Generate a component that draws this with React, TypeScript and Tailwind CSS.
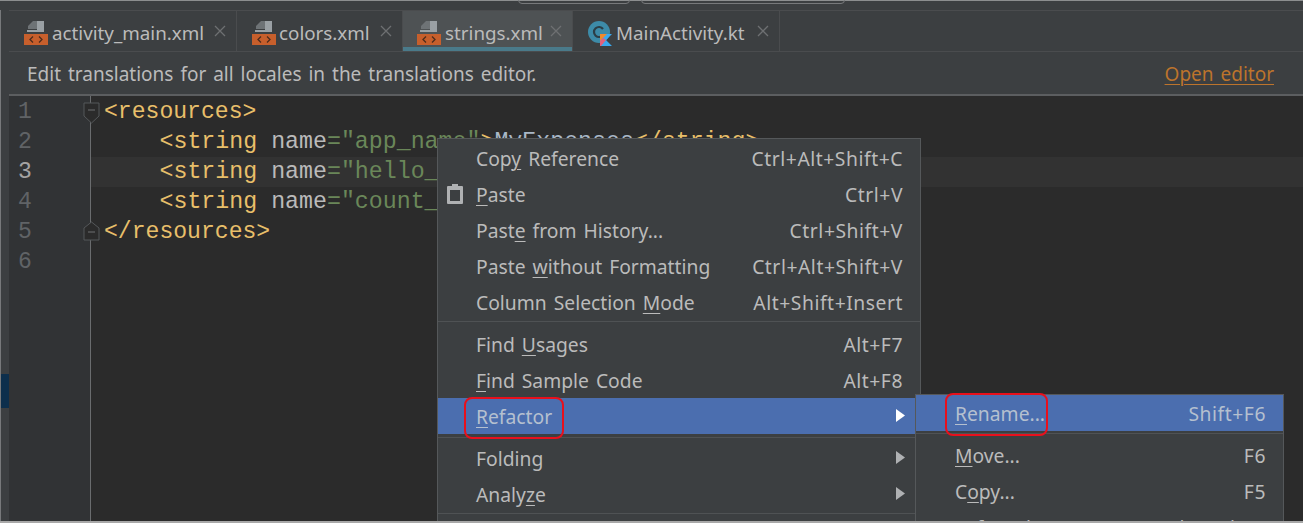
import React from 'react';

const UI_FONT = "font-['Noto_Sans','Noto_Sans_CJK_KR',sans-serif]";

const XmlIcon = () => (
  <svg width="24" height="24" viewBox="0 0 24 24" className="shrink-0">
    <path d="M9 0h4v8H4V5z" fill="#6e7376" />
    <path d="M13 0h7v11H3V9h10z" fill="#9aa0a4" />
    <rect x="0" y="13" width="24" height="11" fill="#c75f2c" />
    <path d="M9 15.500 6 18.500l3 3M15 15.500l3 3-3 3" fill="none" stroke="#4d2c1c" strokeWidth="1.300" />
  </svg>
);

const KotlinIcon = () => (
  <svg width="24" height="25" viewBox="0 0 24 25" className="shrink-0">
    <circle cx="11" cy="11" r="11" fill="#3d8ba8" />
    <path d="M15 8a5 5 0 1 0 0 6" fill="none" stroke="#2c3e46" strokeWidth="2.200" />
    <path d="M12 13h12l-6 6 6 6H12z" fill="#39a9f0" />
    <path d="M12 13h7l-7 7z" fill="#f08a2c" />
    <path d="M12 25v-5l3-3 3 2-5 6z" fill="#e2607c" />
  </svg>
);

const tabs = [
  { name: 'activity_main.xml', width: 'w-[228px]', pl: 'pl-[15px]', gap: 'gap-[4px]', icon: <XmlIcon /> },
  { name: 'colors.xml', width: 'w-[166px]', pl: 'pl-[15px]', gap: 'gap-[3px]', icon: <XmlIcon /> },
  { name: 'strings.xml', width: 'w-[170px]', pl: 'pl-[14px]', gap: 'gap-[4px]', icon: <XmlIcon />, active: true },
  { name: 'MainActivity.kt', width: 'w-[207px]', pl: 'pl-[15px]', gap: 'gap-[4px]', icon: <KotlinIcon /> },
];

const lineNumbers = [1, 2, 3, 4, 5, 6];

const Tag = ({ children }: { children: React.ReactNode }) => <span className="text-[#e8bf6a]">{children}</span>;
const Attr = ({ children }: { children: React.ReactNode }) => <span className="text-[#bababa]">{children}</span>;
const Str = ({ children }: { children: React.ReactNode }) => <span className="text-[#6a8759]">{children}</span>;

const StringOpen = ({ children }: { children: React.ReactNode }) => (
  <>
    <span className="pl-[55.500px]" />
    <Tag>&lt;string</Tag> <Attr>name</Attr>
    <Str>={children}</Str>
  </>
);

const U = ({ children }: { children: React.ReactNode }) => (
  <span className="underline underline-offset-[3px] decoration-1">{children}</span>
);

type Item = {
  label: React.ReactNode;
  key?: string;
  arrow?: boolean;
  selected?: boolean;
  paste?: boolean;
};

const ClipboardIcon = () => (
  <svg width="18" height="22" viewBox="0 0 18 22" className="absolute left-[8px] top-[6px]">
    <path d="M6 1h6v2h4a1 1 0 0 1 1 1v16a1 1 0 0 1-1 1H2a1 1 0 0 1-1-1V4a1 1 0 0 1 1-1h4z" fill="#afb1b3" />
    <rect x="4" y="7" width="10" height="11" fill="#3c3f41" />
  </svg>
);

const MenuRow = ({ item, textOffset = 'pt-0', leftPad = 'pl-[38px]' }: { item: Item; textOffset?: string; leftPad?: string }) => (
  <div
    className={`relative flex h-[36px] items-center justify-between ${leftPad} pr-[17px] text-[19.300px] [word-spacing:2px] ${textOffset} ${
      item.selected ? 'bg-[#4b6eaf] text-[#b5c0cf]' : 'text-[#bbbbbb]'
    }`}
  >
    {item.paste && <ClipboardIcon />}
    <span className="whitespace-pre">{item.label}</span>
    {item.key && <span className="whitespace-pre tracking-[0.550px]">{item.key}</span>}
    {item.arrow && (
      <svg width="9" height="13" viewBox="0 0 9 13" className="mb-[4px] mr-[-2px]">
        <path d="M0 0l9 6.500-9 6.500z" fill={item.selected ? '#ffffff' : '#afb1b3'} />
      </svg>
    )}
  </div>
);

const menuA: Item[] = [
  { label: <>Cop<U>y</U> Reference</>, key: 'Ctrl+Alt+Shift+C' },
  { label: <><U>P</U>aste</>, key: 'Ctrl+V', paste: true },
  { label: <>Past<U>e</U> from History...</>, key: 'Ctrl+Shift+V' },
  { label: <>Paste <U>w</U>ithout Formatting</>, key: 'Ctrl+Alt+Shift+V' },
  { label: <>Column Selection <U>M</U>ode</>, key: 'Alt+Shift+Insert' },
];
const menuB: Item[] = [
  { label: <>Find <U>U</U>sages</>, key: 'Alt+F7' },
  { label: <><U>F</U>ind Sample Code</>, key: 'Alt+F8' },
  { label: <><U>R</U>efactor</>, arrow: true, selected: true },
];
const menuC: Item[] = [
  { label: 'Folding', arrow: true },
  { label: <>Analy<U>z</U>e</>, arrow: true },
];
const subMenu: Item[] = [
  { label: <><U>M</U>ove...</>, key: 'F6' },
  { label: <>C<U>o</U>py...</>, key: 'F5' },
  { label: <>Safe <U>D</U>elete...</>, key: 'Alt+Delete' },
];

export default function App() {
  return (
    <div className={`relative h-[523px] w-[1303px] overflow-hidden bg-[#3c3f41] ${UI_FONT}`}>
      {/* window chrome at the very top */}
      <div className="relative h-[10px] border-t border-[#8c8e8f] bg-[#3c3f41]">
        <div className="absolute left-[518px] top-[-6px] h-[9px] w-[112px] rounded-[4px] border border-[#77797b]" />
        <div className="absolute left-[641px] top-[-6px] h-[9px] w-[204px] rounded-[4px] border border-[#77797b]" />
      </div>

      <div className="flex h-[513px]">
        {/* tool strip */}
        <div className="flex w-[9px] shrink-0 flex-col border-l border-[#77797b] bg-[#3c3f41] pt-[364px]">
          <div className="h-[34px] bg-[#0d2f4c]" />
        </div>

        <div className="flex min-w-0 flex-1 flex-col">
          {/* tabs */}
          <div className="flex h-[42px] shrink-0 border-y border-[#4a4c4e] bg-[#3c3f41]">
            {tabs.map((t) => (
              <div
                key={t.name}
                className={`relative flex ${t.width} ${t.pl} ${t.gap} items-center border-r border-[#4a4c4e] pt-[4px] text-[18.800px] text-[#bbbbbb] ${
                  t.active ? 'bg-[#4e5254]' : ''
                }`}
              >
                {t.icon}
                <span className="whitespace-pre">{t.name}</span>
                <svg width="12" height="12" viewBox="0 0 12 12" className="absolute right-[10px] top-[14px]">
                  <path d="M1 1l10 10M11 1 1 11" stroke="#6e7072" strokeWidth="1.300" />
                </svg>
                {t.active && <div className="absolute inset-x-0 bottom-0 h-[4px] bg-[#4a7a8a]" />}
              </div>
            ))}
          </div>

          {/* notification bar */}
          <div className="flex h-[44px] shrink-0 items-center justify-between border-b-2 border-[#5c5e60] pl-[18px] pr-[29px] pt-[3px] text-[19px] text-[#bbbbbb] [word-spacing:2px]">
            <span>Edit translations for all locales in the translations editor.</span>
            <span className="text-[#bd742c] underline underline-offset-[3px] decoration-1">Open editor</span>
          </div>

          {/* editor */}
          <div className="flex min-h-0 flex-1 font-['Liberation_Mono',monospace] text-[23.080px] leading-[30px]">
            <div className="w-[82px] shrink-0 border-r border-[#6a6c6e] bg-[#313335] pt-[1px]">
              {lineNumbers.map((n) => (
                <div key={n} className={`h-[30px] pl-[9px] ${n === 3 ? 'text-[#a4a3a3]' : 'text-[#606366]'}`}>
                  {n}
                </div>
              ))}
            </div>
            <div className="relative flex-1 bg-[#2b2b2b] pl-[13px] pt-[1px]">
              <svg width="17" height="24" viewBox="0 0 17 24" className="absolute left-[-8px] top-[6px]">
                <path d="M1 1h15v13l-7.500 7L1 14z" fill="#2b2b2b" stroke="#55585a" />
                <path d="M5 8h7" stroke="#6e7072" />
              </svg>
              <svg width="17" height="20" viewBox="0 0 17 20" className="absolute left-[-8px] top-[125px]">
                <path d="M1 19h15V7L8.500 1 1 7z" fill="#2b2b2b" stroke="#55585a" />
                <path d="M5 11h7" stroke="#6e7072" />
              </svg>
              <div className="h-[30px] whitespace-pre"><Tag>&lt;resources&gt;</Tag></div>
              <div className="h-[30px] whitespace-pre text-[23.250px]">
                <StringOpen>"app_name"</StringOpen>
                <Tag>&gt;</Tag>
                <span className="text-[#a9b7c6]">MyExpenses</span>
                <Tag>&lt;/string&gt;</Tag>
              </div>
              <div className="ml-[-13px] h-[30px] whitespace-pre bg-[#323232] pl-[13px] text-[23.250px]"><StringOpen>"hello_</StringOpen></div>
              <div className="h-[30px] whitespace-pre text-[23.250px]"><StringOpen>"count_</StringOpen></div>
              <div className="h-[30px] whitespace-pre"><Tag>&lt;/resources&gt;</Tag></div>
            </div>
          </div>
        </div>
      </div>

      {/* context menu */}
      <div className="absolute left-[437px] top-[138px] h-[390px] w-[484px] border border-[#55585a] bg-[#3c3f41] pt-[2px]">
        {menuA.map((i, n) => <MenuRow key={n} item={i} />)}
        <div className="flex h-[5px] items-start">
          <div className="h-px w-full bg-[#4f5254]" />
        </div>
        {menuB.map((i, n) => <MenuRow key={n} item={i} textOffset="pt-[2px]" />)}
        <div className="flex h-[7px] items-center">
          <div className="h-px w-full bg-[#4f5254]" />
        </div>
        {menuC.map((i, n) => <MenuRow key={n} item={i} />)}
        <div className="h-px w-full bg-[#4f5254]" />
      </div>

      {/* refactor submenu */}
      <div className="absolute left-[915px] top-[394px] h-[140px] w-[369px] border border-[#55585a] bg-[#3c3f41]">
        <MenuRow item={{ label: <><U>R</U>ename...</>, key: 'Shift+F6', selected: true }} textOffset="pt-[3px]" leftPad="pl-[39px]" />
        <div className="flex h-[7px] items-start pt-[2px]">
          <div className="h-px w-full bg-[#4f5254]" />
        </div>
        {subMenu.map((i, n) => <MenuRow key={n} item={i} leftPad="pl-[39px]" />)}
      </div>

      {/* red callouts */}
      <div className="absolute left-[464px] top-[397px] h-[42px] w-[100px] rounded-[8px] border-2 border-[#e8101c]" />
      <div className="absolute left-[945px] top-[393px] h-[43px] w-[103px] rounded-[8px] border-2 border-[#e8101c]" />

      {/* picture edge sits over everything */}
      <div className="absolute inset-x-0 bottom-0 h-[2px] bg-[#a8a8a8]" />
    </div>
  );
}
